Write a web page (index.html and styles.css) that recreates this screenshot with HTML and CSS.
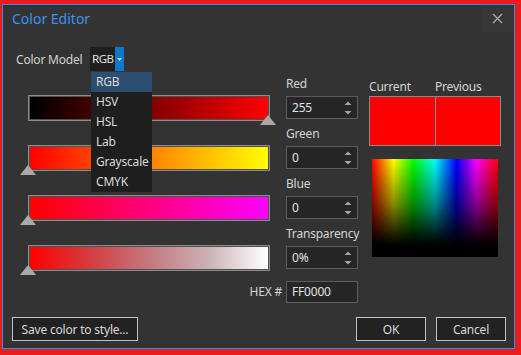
FILE: index.html
```html
<!DOCTYPE html>
<html>
<head>
<meta charset="utf-8">
<link rel="stylesheet" href="styles.css">
</head>
<body>
<div class="dialog">
  <div class="header">
    <div class="title">Color Editor</div>
    <div class="close">
      <svg width="11" height="11" viewBox="0 0 11 11"><path d="M1 1L10 10M10 1L1 10" stroke="#a8a8a8" stroke-width="1.4" fill="none"/></svg>
    </div>
  </div>

  <div class="model-row">
    <span class="label">Color Model</span>
    <div class="combo">
      <span class="combo-text">RGB</span>
      <span class="combo-btn"><svg width="5" height="3" viewBox="0 0 5 3"><path d="M0 0H5L2.5 3Z" fill="#b9d3ee"/></svg></span>
      <ul class="dropdown">
        <li class="sel">RGB</li>
        <li>HSV</li>
        <li>HSL</li>
        <li>Lab</li>
        <li>Grayscale</li>
        <li>CMYK</li>
      </ul>
    </div>
  </div>

  <div class="main">
    <div class="bars">
      <div class="bar"><div class="fill f-red"></div><span class="thumb" style="left:100%"></span></div>
      <div class="bar"><div class="fill f-green"></div><span class="thumb" style="left:0%"></span></div>
      <div class="bar"><div class="fill f-blue"></div><span class="thumb" style="left:0%"></span></div>
      <div class="bar"><div class="fill f-alpha"></div><span class="thumb" style="left:0%"></span></div>
    </div>

    <div class="fields">
      <div class="group">
        <div class="flabel">Red</div>
        <div class="spin"><span>255</span><svg class="arrows" width="8" height="14" viewBox="0 0 8 14"><path d="M0.5 4H7.5L4 0.5Z M0.5 10H7.5L4 13.5Z" fill="#a6a6a6"/></svg></div>
      </div>
      <div class="group">
        <div class="flabel">Green</div>
        <div class="spin"><span>0</span><svg class="arrows" width="8" height="14" viewBox="0 0 8 14"><path d="M0.5 4H7.5L4 0.5Z M0.5 10H7.5L4 13.5Z" fill="#a6a6a6"/></svg></div>
      </div>
      <div class="group">
        <div class="flabel">Blue</div>
        <div class="spin"><span>0</span><svg class="arrows" width="8" height="14" viewBox="0 0 8 14"><path d="M0.5 4H7.5L4 0.5Z M0.5 10H7.5L4 13.5Z" fill="#a6a6a6"/></svg></div>
      </div>
      <div class="group">
        <div class="flabel">Transparency</div>
        <div class="spin"><span>0%</span><svg class="arrows" width="8" height="14" viewBox="0 0 8 14"><path d="M0.5 4H7.5L4 0.5Z M0.5 10H7.5L4 13.5Z" fill="#a6a6a6"/></svg></div>
      </div>
    </div>

    <div class="preview">
      <div class="plabels"><span>Current</span><span>Previous</span></div>
      <div class="swatches"><div class="sw"></div><div class="sw"></div></div>
      <div class="spectrum"></div>
    </div>

    <div class="hex-label">HEX #</div>
    <div class="hex-input">FF0000</div>
  </div>

  <div class="footer">
    <button class="btn save">Save color to style...</button>
    <div class="right-btns">
      <button class="btn ok">OK</button>
      <button class="btn">Cancel</button>
    </div>
  </div>
</div>
</body>
</html>
```

FILE: styles.css
```css
html, body {
  margin: 0;
  padding: 0;
}
body {
  width: 521px;
  height: 355px;
  background: #ea1a1d;
  font-family: "Noto Sans", "Open Sans", sans-serif;
  font-size: 12px;
  letter-spacing: -0.2px;
  color: #d6d6d6;
  overflow: hidden;
}
.dialog {
  margin: 4px 0 0 2px;
  width: 513px;
  height: 345px;
  box-sizing: border-box;
  border: 1px solid #2d8ff0;
  background: #333333;
  display: flex;
  flex-direction: column;
  padding-bottom: 7px;
}
.header {
  height: 27px;
  display: flex;
  justify-content: space-between;
  align-items: stretch;
}
.title {
  padding-left: 9px;
  font-size: 14px;
  letter-spacing: 0;
  line-height: 27px;
  color: #3a93ec;
}
.close {
  width: 33px;
  background: #363636;
  display: flex;
  align-items: center;
  justify-content: center;
}
.model-row {
  margin-top: 15px;
  padding-left: 13px;
  display: flex;
  align-items: center;
  height: 24px;
}
.label {
  width: 74px;
  color: #d2d2d2;
}
.combo {
  position: relative;
  display: flex;
  width: 34px;
  height: 24px;
  background: #1f1f1f;
}
.combo-text {
  padding-left: 2px;
  line-height: 24px;
  color: #e0e0e0;
  width: 23px;
  font-size: 11.5px;
  letter-spacing: -0.5px;
}
.combo-btn {
  width: 9px;
  background: #0b79d0;
  display: flex;
  align-items: center;
  justify-content: center;
}
.dropdown {
  position: absolute;
  top: 25px;
  left: 1px;
  width: 61px;
  margin: 0;
  padding: 0;
  list-style: none;
  background: #1e1e1e;
  z-index: 5;
}
.dropdown li {
  height: 20px;
  line-height: 20px;
  padding-left: 5px;
  color: #dadada;
}
.dropdown li.sel {
  background: #2c4e71;
}
.main {
  margin-left: 25px;
  display: grid;
  grid-template-columns: 242px 72px 132px;
  column-gap: 16px;
  grid-template-rows: auto auto;
}
.main .preview {
  margin-left: -5px;
}
.bars {
  padding-top: 24px;
}
.bar {
  position: relative;
  height: 26px;
  box-sizing: border-box;
  border: 1px solid #8c8c8c;
  padding: 1px;
  background: #505050;
  margin-bottom: 24px;
}
.bar:last-child {
  margin-bottom: 0;
}
.fill {
  height: 100%;
}
.f-red { background: linear-gradient(to right, #000, #f00); }
.f-green { background: linear-gradient(to right, #f00, #ff8000 50%, #ff0); }
.f-blue { background: linear-gradient(to right, #f00, #f0f); }
.f-alpha { background: linear-gradient(to right, #f00 0%, #d43c40 25%, #c47880 50%, #cbb2b6 75%, #fff 100%); }
.thumb {
  position: absolute;
  top: 19px;
  margin-left: -9px;
  width: 0;
  height: 0;
  border-left: 8px solid transparent;
  border-right: 8px solid transparent;
  border-bottom: 10px solid #a9a9a9;
}
.fields {
  padding-top: 3px;
}
.group {
  height: 50px;
}
.flabel {
  line-height: 20px;
  height: 22px;
  color: #d4d4d4;
}
.spin, .hex-input {
  position: relative;
  box-sizing: border-box;
  height: 23px;
  border: 1px solid #5c5c5c;
  background: #262626;
  padding-left: 5px;
  line-height: 21px;
  color: #e2e2e2;
}
.arrows {
  position: absolute;
  right: 5px;
  top: 4px;
}
.preview {
  padding-top: 9px;
}
.plabels {
  display: flex;
  height: 16px;
  line-height: 14px;
  color: #d4d4d4;
}
.plabels span {
  width: 66px;
}
.swatches {
  display: flex;
  height: 50px;
  box-sizing: border-box;
  border: 1px solid #8a8a8a;
  width: 132px;
}
.sw {
  flex: 1;
  background: #ff0000;
}
.sw + .sw {
  border-left: 1px solid #8a8a8a;
}
.spectrum {
  margin: 13px 0 0 3px;
  width: 126px;
  height: 98px;
  background:
    linear-gradient(to bottom, rgba(0,0,0,0) 0%, rgba(0,0,0,0.45) 45%, rgba(0,0,0,0.85) 75%, #000 88%, #000 100%),
    linear-gradient(to right, #f00 0%, #ff0 17%, #0f0 33%, #0ff 50%, #00f 67%, #f0f 83%, #f00 100%);
}
.hex-label {
  grid-column: 1;
  grid-row: 2;
  justify-self: end;
  margin-right: -12px;
  line-height: 22px;
  margin-top: 7px;
  color: #d4d4d4;
}
.hex-input {
  grid-column: 2;
  grid-row: 2;
  margin-top: 7px;
  height: 22px;
  line-height: 20px;
}
.footer {
  margin-top: auto;
  display: flex;
  justify-content: space-between;
  padding: 0 8px 0 9px;
}
.right-btns {
  display: flex;
  gap: 10px;
}
.btn {
  height: 24px;
  box-sizing: border-box;
  border: 1px solid #c2c2c2;
  background: #222222;
  color: #d8d8d8;
  font-family: "Noto Sans", "Open Sans", sans-serif;
  font-size: 12px;
  letter-spacing: -0.2px;
  padding: 0;
  margin: 0;
}
.save {
  width: 126px;
}
.right-btns .btn {
  width: 70px;
}
```
